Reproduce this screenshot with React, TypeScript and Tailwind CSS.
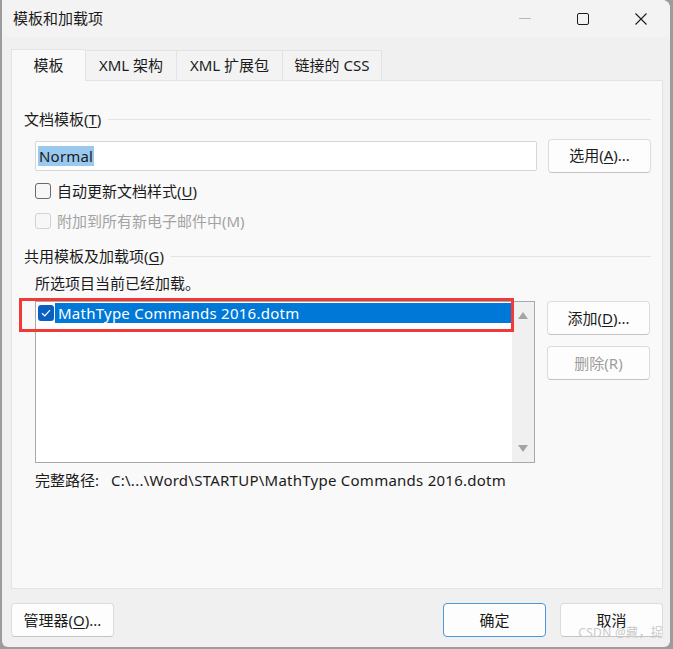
import React from 'react';

const FONT = { fontFamily: '"Segoe UI","Noto Sans","Noto Sans CJK SC",sans-serif' };

const Mn: React.FC<{ c: string }> = ({ c }) => <span className="underline underline-offset-2">{c}</span>;

const Btn: React.FC<{ children: React.ReactNode; disabled?: boolean; primary?: boolean; className?: string }> = ({
  children,
  disabled,
  primary,
  className = '',
}) => (
  <div
    className={`flex items-center justify-center w-[103px] h-[34px] rounded-[4px] border text-[15px] ${
      primary ? 'border-[#4d95dc] bg-[#fdfdfd]' : 'border-[#dcdcdc] border-b-[#c4c4c4] bg-[#fdfdfd]'
    } ${disabled ? 'text-[#9d9d9d]' : 'text-[#1b1b1b]'} ${className}`}
  >
    {children}
  </div>
);

const GroupLabel: React.FC<{ children: React.ReactNode; className?: string }> = ({ children, className = '' }) => (
  <div className={`flex items-center h-[20px] pl-[12px] pr-[11px] ${className}`}>
    <span className="text-[15px] text-[#1b1b1b] whitespace-nowrap">{children}</span>
    <div className="flex-1 h-px bg-[#e3e3e3] ml-[7px]" />
  </div>
);

const Tab: React.FC<{ label: string; w: string; active?: boolean }> = ({ label, w, active }) => (
  <div
    className={`${w} flex items-center justify-center text-[15px] text-[#1b1b1b] border-t border-r border-[#e3e3e3] ${
      active ? 'h-[32px] bg-[#f9f9f9] border-l -mb-px relative z-10' : 'h-[30px] bg-[#f3f3f3]'
    }`}
  >
    {label}
  </div>
);

export default function App() {
  return (
    <div className="w-[673px] h-[649px] bg-[#9c9c9c] overflow-hidden" style={FONT}>
      <div className="ml-[2px] w-[668px] h-[647px] bg-[#f0f0f0] rounded-tr-[8px] rounded-bl-[6px] rounded-br-[6px] flex flex-col relative">
        {/* title bar */}
        <div className="h-[37px] flex items-center bg-[#f3f3f3] rounded-tr-[8px]">
          <span className="ml-[11px] text-[15px] text-[#1b1b1b]">模板和加载项</span>
          <div className="ml-auto flex items-center h-full">
            <div className="w-[58px] h-full flex items-center justify-center">
              <div className="w-[12px] h-px bg-[#b8b8b8]" />
            </div>
            <div className="w-[58px] h-full flex items-center justify-center">
              <div className="w-[12px] h-[12px] border border-[#1b1b1b] rounded-[2px]" />
            </div>
            <div className="w-[58px] h-full flex items-center justify-center">
              <svg width="12" height="12" viewBox="0 0 12 12">
                <path d="M0.5 0.5 L11.5 11.5 M11.5 0.5 L0.5 11.5" stroke="#1b1b1b" strokeWidth="1.1" />
              </svg>
            </div>
          </div>
        </div>

        {/* tabs */}
        <div className="mt-[11px] ml-[9px] flex items-end h-[32px]">
          <Tab label="模板" w="w-[75px]" active />
          <Tab label="XML 架构" w="w-[91px]" />
          <Tab label="XML 扩展包" w="w-[106px]" />
          <Tab label="链接的 CSS" w="w-[99px]" />
        </div>

        {/* panel */}
        <div className="ml-[9px] w-[652px] h-[509px] bg-[#f9f9f9] border border-[#e3e3e3] flex flex-col">
          <GroupLabel className="mt-[28px]">
            文档模板(<Mn c="T" />)
          </GroupLabel>

          <div className="mt-[10px] flex items-center h-[33px]">
            <div className="ml-[23px] w-[502px] h-[30px] bg-white border border-[#d6d6d6] rounded-[2px] flex items-center pl-[2px]">
              <span className="bg-[#99c9ef] text-[15px] text-[#1b1b1b] px-px leading-[20px] tracking-[0.2px]">Normal</span>
            </div>
            <Btn className="ml-[11px] h-[33px]">
              选用(<Mn c="A" />)...
            </Btn>
          </div>

          <div className="mt-[9px] ml-[23px] flex items-center h-[20px]">
            <div className="w-[16px] h-[16px] rounded-[3px] border border-[#6a6a6a] bg-[#f7f7f7]" />
            <span className="ml-[6px] text-[15px] text-[#1b1b1b]">
              自动更新文档样式(<Mn c="U" />)
            </span>
          </div>

          <div className="mt-[10px] ml-[23px] flex items-center h-[20px]">
            <div className="w-[16px] h-[16px] rounded-[3px] border border-[#d2d2d2] bg-[#f7f7f7]" />
            <span className="ml-[6px] text-[15px] text-[#a3a3a3]">附加到所有新电子邮件中(M)</span>
          </div>

          <GroupLabel className="mt-[15px]">
            共用模板及加载项(<Mn c="G" />)
          </GroupLabel>

          <div className="mt-[7px] ml-[23px] h-[20px] flex items-center text-[15px] text-[#1b1b1b]">
            所选项目当前已经加载。
          </div>

          <div className="mt-[8px] flex items-start">
            <div className="relative ml-[23px] w-[500px] h-[162px] bg-white border border-[#a9a9a9] flex">
              <div className="flex-1 pt-px pl-[2px]">
                <div className="flex items-center h-[20px]">
                  <div className="w-[16px] h-[16px] rounded-[3px] bg-[#0a60c0] flex items-center justify-center">
                    <svg width="10" height="8" viewBox="0 0 10 8">
                      <path d="M1 4.2 L3.8 6.8 L9 1.2" fill="none" stroke="white" strokeWidth="1.2" />
                    </svg>
                  </div>
                  <div className="ml-px flex-1 h-[20px] bg-[#0078d7] text-white text-[15px] leading-[20px] pl-[3px] tracking-[0.25px]">
                    MathType Commands 2016.dotm
                  </div>
                </div>
              </div>
              <div className="w-[22px] h-full bg-[#f0f0f0] flex flex-col items-center justify-between py-[10px]">
                <svg width="10" height="7" viewBox="0 0 10 7">
                  <path d="M5 0 L10 7 L0 7 Z" fill="#a4a4a4" />
                </svg>
                <svg width="10" height="7" viewBox="0 0 10 7">
                  <path d="M0 0 L10 0 L5 7 Z" fill="#a4a4a4" />
                </svg>
              </div>
              {/* annotation */}
              <div className="absolute left-[-17px] top-[-4px] w-[495px] h-[34px] border-[3px] border-[#f03a3a]" />
            </div>
            <div className="ml-[12px] flex flex-col">
              <Btn>
                添加(<Mn c="D" />)...
              </Btn>
              <Btn disabled className="mt-[11px]">
                删除(R)
              </Btn>
            </div>
          </div>

          <div className="mt-[7px] ml-[23px] h-[20px] flex items-center text-[15px] text-[#1b1b1b]">
            <span>完整路径:</span>
            <span className="ml-[12px] tracking-[0.25px]">C:\...\Word\STARTUP\MathType Commands 2016.dotm</span>
          </div>
        </div>

        {/* bottom buttons */}
        <div className="mt-[14px] flex items-center">
          <Btn className="ml-[9px] h-[33px]">
            管理器(<Mn c="O" />)...
          </Btn>
          <Btn primary className="ml-auto h-[33px]">
            确定
          </Btn>
          <Btn className="ml-[14px] mr-[7px] h-[33px]">取消</Btn>
        </div>

        <div className="absolute right-[7px] bottom-[7px] text-[12px] leading-[14px] text-[#c9c9c9] tracking-[0.3px]">
          CSDN @藏，捉
        </div>
      </div>
    </div>
  );
}
